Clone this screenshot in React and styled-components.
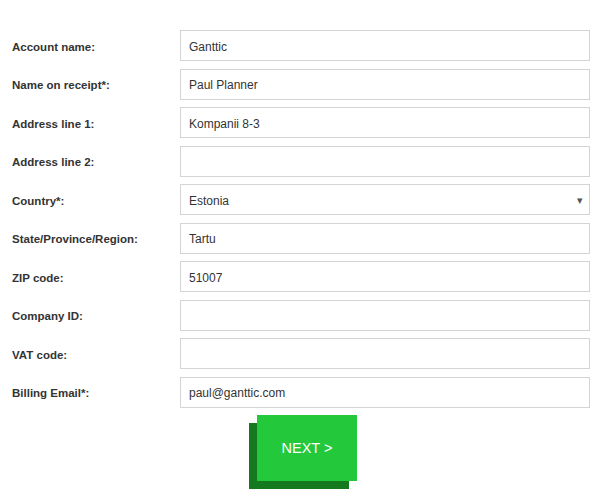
import React from 'react';
import styled, { createGlobalStyle } from 'styled-components';

const GlobalStyle = createGlobalStyle`
    body {
        margin: 0;
        background: #fff;
        font-family: "Liberation Sans", Arial, sans-serif;
        color: #333;
    }
`;

const fields = [
    { label: 'Account name:', value: 'Ganttic' },
    { label: 'Name on receipt*:', value: 'Paul Planner' },
    { label: 'Address line 1:', value: 'Kompanii 8-3' },
    { label: 'Address line 2:', value: '' },
    { label: 'Country*:', value: 'Estonia', select: true },
    { label: 'State/Province/Region:', value: 'Tartu' },
    { label: 'ZIP code:', value: '51007' },
    { label: 'Company ID:', value: '' },
    { label: 'VAT code:', value: '' },
    { label: 'Billing Email*:', value: 'paul@ganttic.com' },
];

const App = () => (
    <>
        <GlobalStyle />
        <Form>
            {fields.map(f => (
                <Row key={f.label}>
                    <Label>{f.label}</Label>
                    {f.select ? (
                        <SelectBox>
                            <span>{f.value}</span>
                            <Arrow>▾</Arrow>
                        </SelectBox>
                    ) : (
                        <Input defaultValue={f.value} />
                    )}
                </Row>
            ))}
            <ButtonRow>
                <NextButton>NEXT &gt;</NextButton>
            </ButtonRow>
        </Form>
    </>
);

const Form = styled.form`
    display: flex;
    flex-direction: column;
    gap: 7.5px;
    padding: 30px 11px 20px 12px;
    width: 600px;
    box-sizing: border-box;
`;

const Row = styled.div`
    display: grid;
    grid-template-columns: 168px 410px;
    align-items: center;
`;

const Label = styled.label`
    font-size: 11.5px;
    font-weight: bold;
    color: #333;
    padding-top: 2px;
`;

const Input = styled.input`
    height: 31px;
    box-sizing: border-box;
    border: 1px solid #d4d4d4;
    padding: 2px 8px 0;
    font-family: "Liberation Sans", Arial, sans-serif;
    font-size: 12px;
    color: #333;
    outline: none;
`;

const SelectBox = styled.div`
    height: 31px;
    box-sizing: border-box;
    border: 1px solid #d4d4d4;
    padding: 2px 6px 0 8px;
    display: flex;
    align-items: center;
    justify-content: space-between;
    font-size: 12px;
    color: #333;
`;

const Arrow = styled.span`
    font-size: 11px;
    color: #555;
`;

const ButtonRow = styled.div`
    display: flex;
    padding-left: 245px;
`;

const NextButton = styled.button`
    width: 100px;
    height: 66px;
    border: none;
    background: #23c83b;
    color: #fff;
    font-family: "Liberation Sans", Arial, sans-serif;
    font-size: 14.5px;
    box-shadow: -8px 8px 0 #14791f;
    cursor: pointer;
`;

export default App;
